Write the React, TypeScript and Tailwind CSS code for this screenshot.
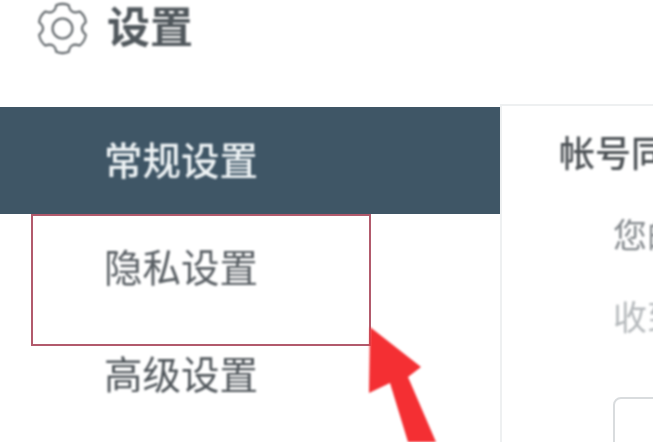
const FONT = "font-['Liberation_Sans','Noto_Sans_CJK_SC',sans-serif]";
const SOFT = "blur-[0.8px]";

// six rounded teeth round the centre of a 56 box
function gearPath() {
  const at = (deg: number, r: number) => {
    const t = (deg * Math.PI) / 180;
    return `${(28 + r * Math.cos(t)).toFixed(2)} ${(28 + r * Math.sin(t)).toFixed(2)}`;
  };
  let d = `M${at(-90 - 15, 25.5)}`;
  for (let i = 0; i < 6; i++) {
    const a = -90 + i * 60;
    d += ` Q${at(a, 27.5)} ${at(a + 15, 25.5)}`;
    d += ` Q${at(a + 30, 16.5)} ${at(a + 45, 25.5)}`;
  }
  return d + "Z";
}

function Gear() {
  return (
    <svg width="53" height="53" viewBox="0 0 56 56" fill="none" stroke="#5c6266" strokeWidth="2.2" strokeLinejoin="round" className={`shrink-0 ${SOFT}`}>
      <path d={gearPath()} />
      <circle cx="28" cy="28" r="10.5" />
    </svg>
  );
}

function Arrow() {
  return (
    <svg className={`absolute left-[360px] top-[320px] ${SOFT}`} width="90" height="122" viewBox="360 320 90 122">
      <polygon points="370,327 421,367 408,377 436,442 408,442 390,383 369,393" fill="#f42f33" />
    </svg>
  );
}

export default function App() {
  return (
    <div className={`${FONT} relative w-[667px] h-[442px] overflow-hidden bg-white`}>
      {/* header */}
      <div className="flex items-center h-[104px] pl-[36px] pb-[48px] gap-[18px]">
        <Gear />
        <span className={`text-[43px] leading-none text-[#50575c] font-semibold ${SOFT}`}>设置</span>
      </div>

      <div className="flex w-[653px] h-[338px]">
        {/* side menu */}
        <div className="w-[500px] shrink-0 pt-[3px] text-[38.5px] leading-none">
          <div className="flex items-center h-[107px] pl-[104px] pt-[4px] bg-[#3f5666] text-[#eef3f5] font-medium">
            <span className={SOFT}>常规设置</span>
          </div>
          <div className="flex items-center h-[107px] pl-[104px] pt-[4px] text-[#585e63]">
            <span className={SOFT}>隐私设置</span>
          </div>
          <div className="flex items-center h-[107px] pl-[104px] pt-[4px] text-[#50565b]">
            <span className={SOFT}>高级设置</span>
          </div>
        </div>

        {/* content, cut off by the crop */}
        <div className="flex-1 min-w-0 overflow-hidden border-l-2 border-t-2 border-[#eef0f1] pl-[57px] pt-[31px]">
          <div className={`text-[36px] leading-none whitespace-nowrap text-[#4d5256] font-medium ${SOFT}`}>帐号同步</div>
          <div className="pl-[54px]">
            <div className={`mt-[46px] text-[34px] leading-none whitespace-nowrap text-[#83888c] ${SOFT}`}>您的帐号</div>
            <div className={`mt-[48px] text-[34px] leading-none whitespace-nowrap text-[#b4b8bb] ${SOFT}`}>收到消息</div>
            <div className="mt-[62px] w-[120px] h-[80px] rounded-[8px] border-2 border-[#d9dcde]" />
          </div>
        </div>
      </div>

      {/* annotation */}
      <div className="absolute left-[31px] top-[214px] w-[340px] h-[132px] border-2 border-[#b25a6c]" />
      <Arrow />
    </div>
  );
}
